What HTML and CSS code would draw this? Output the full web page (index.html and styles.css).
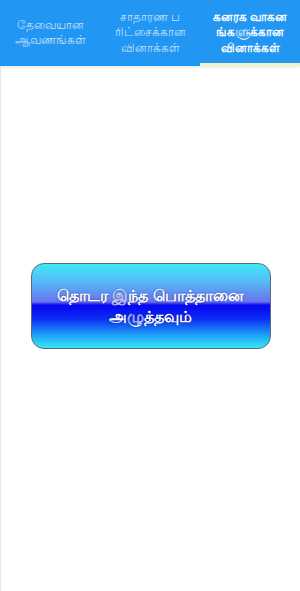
FILE: index.html
```html
<!DOCTYPE html>
<html lang="ta">
<head>
    <meta charset="UTF-8">
    <meta name="viewport" content="width=device-width, initial-scale=1.0">
    <title>வினாக்கள்</title>
    <link rel="stylesheet" href="styles.css">
</head>
<body>
    <header class="tab-bar">
        <a class="tab" href="#docs">தேவையான ஆவணங்கள்</a>
        <a class="tab" href="#general">சாதாரண ப ரிட்சைக்கான வினாக்கள்</a>
        <a class="tab active" href="#heavy">கனரக வாகன ங்களுக்கான வினாக்கள்</a>
    </header>
    <main class="page">
        <button class="start-btn">தொடர இந்த பொத்தானை அழுத்தவும்</button>
    </main>
</body>
</html>
```

FILE: styles.css
```css
body {
    margin: 0;
    padding: 0;
    font-family: "Noto Sans", Roboto, sans-serif;
    background: #ffffff;
    height: 100vh;
    display: flex;
    flex-direction: column;
}

.tab-bar {
    display: flex;
    background: #2196f3;
    height: 66px;
    box-shadow: 0 1px 3px rgba(0, 0, 0, 0.12);
}

.tab {
    flex: 1 1 0;
    min-width: 0;
    display: flex;
    align-items: center;
    justify-content: center;
    text-align: center;
    padding: 1px 4px 0;
    font-size: 12px;
    line-height: 15.5px;
    color: rgba(255, 255, 255, 0.72);
    text-decoration: none;
    border-bottom: 3px solid transparent;
}

.tab.active {
    color: #ffffff;
    font-weight: 700;
    border-bottom-color: #eef7c4;
}

.page {
    flex: 1;
    display: flex;
    align-items: flex-start;
    justify-content: center;
    padding-top: 197px;
    border-left: 1px solid #e8e8e8;
}

.start-btn {
    width: 240px;
    height: 86px;
    border: 1px solid #5a6a78;
    border-radius: 13px;
    background: linear-gradient(to bottom,
        #3fe8f8 0%,
        #55b8f6 22%,
        #6a72ee 45%,
        #0606f2 49%,
        #0a2cf4 65%,
        #22b4f6 88%,
        #38e6f8 100%);
    color: #ffffff;
    font-family: "Noto Sans", Roboto, sans-serif;
    font-size: 15.5px;
    font-weight: 700;
    line-height: 21px;
    padding: 0 20px;
    text-shadow: 0 0 2px rgba(0, 0, 60, 0.5);
    cursor: pointer;
}
```
